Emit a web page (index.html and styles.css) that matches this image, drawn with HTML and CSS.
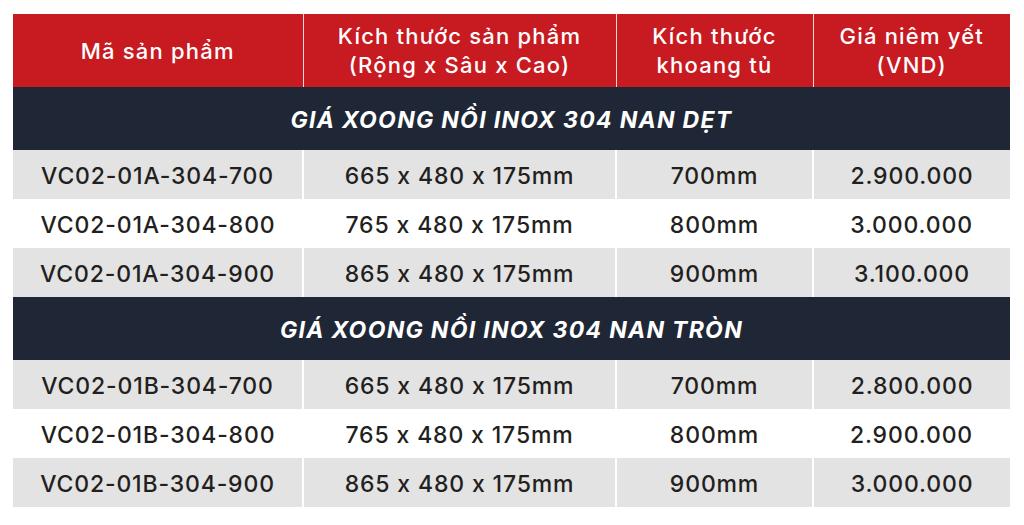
FILE: index.html
```html
<!DOCTYPE html>
<html lang="vi">
<head>
<meta charset="utf-8">
<link rel="stylesheet" href="styles.css">
</head>
<body>
<table class="price">
  <colgroup>
    <col class="c1"><col class="c2"><col class="c3"><col class="c4">
  </colgroup>
  <thead>
    <tr class="head">
      <th>Mã sản phẩm</th>
      <th>Kích thước sản phẩm<br>(Rộng x Sâu x Cao)</th>
      <th>Kích thước<br>khoang tủ</th>
      <th>Giá niêm yết<br>(VND)</th>
    </tr>
  </thead>
  <tbody>
    <tr class="section"><td colspan="4">GIÁ XOONG NỒI INOX 304 NAN DẸT</td></tr>
    <tr class="row alt"><td>VC02-01A-304-700</td><td>665 x 480 x 175mm</td><td>700mm</td><td>2.900.000</td></tr>
    <tr class="row"><td>VC02-01A-304-800</td><td>765 x 480 x 175mm</td><td>800mm</td><td>3.000.000</td></tr>
    <tr class="row alt"><td>VC02-01A-304-900</td><td>865 x 480 x 175mm</td><td>900mm</td><td>3.100.000</td></tr>
    <tr class="section"><td colspan="4">GIÁ XOONG NỒI INOX 304 NAN TRÒN</td></tr>
    <tr class="row alt"><td>VC02-01B-304-700</td><td>665 x 480 x 175mm</td><td>700mm</td><td>2.800.000</td></tr>
    <tr class="row"><td>VC02-01B-304-800</td><td>765 x 480 x 175mm</td><td>800mm</td><td>2.900.000</td></tr>
    <tr class="row alt"><td>VC02-01B-304-900</td><td>865 x 480 x 175mm</td><td>900mm</td><td>3.000.000</td></tr>
  </tbody>
</table>
</body>
</html>
```
FILE: styles.css
```css
html, body {
  margin: 0;
  padding: 0;
  background: #ffffff;
}
body {
  padding: 14px 0 0 13px;
  font-family: Inter, "Liberation Sans", sans-serif;
}
.price {
  width: 997px;
  border-collapse: collapse;
  table-layout: fixed;
}
.c1 { width: 290px; }
.c2 { width: 313px; }
.c3 { width: 197px; }
.c4 { width: 197px; }

.head th {
  background: #c71a21;
  color: #ffffff;
  font-weight: 500;
  font-size: 22px;
  letter-spacing: 1.2px;
  line-height: 29px;
  height: 72px;
  padding: 1px 0 0;
  text-align: center;
  vertical-align: middle;
}
.head th + th {
  border-left: 1px solid #f4d6d7;
}
.section td {
  background: #1f2736;
  color: #ffffff;
  font-style: italic;
  font-weight: 700;
  font-size: 23px;
  letter-spacing: 1.3px;
  height: 60px;
  padding: 3px 0 0;
  text-align: center;
  vertical-align: middle;
}
.row td {
  height: 47px;
  padding: 2px 0 0;
  text-align: center;
  vertical-align: middle;
  font-size: 23px;
  letter-spacing: 0.85px;
  font-weight: 500;
  color: #231f20;
  background: #ffffff;
}
.row.alt td {
  background: #e3e3e3;
}
.row.alt td + td {
  border-left: 2px solid #ffffff;
}
```
